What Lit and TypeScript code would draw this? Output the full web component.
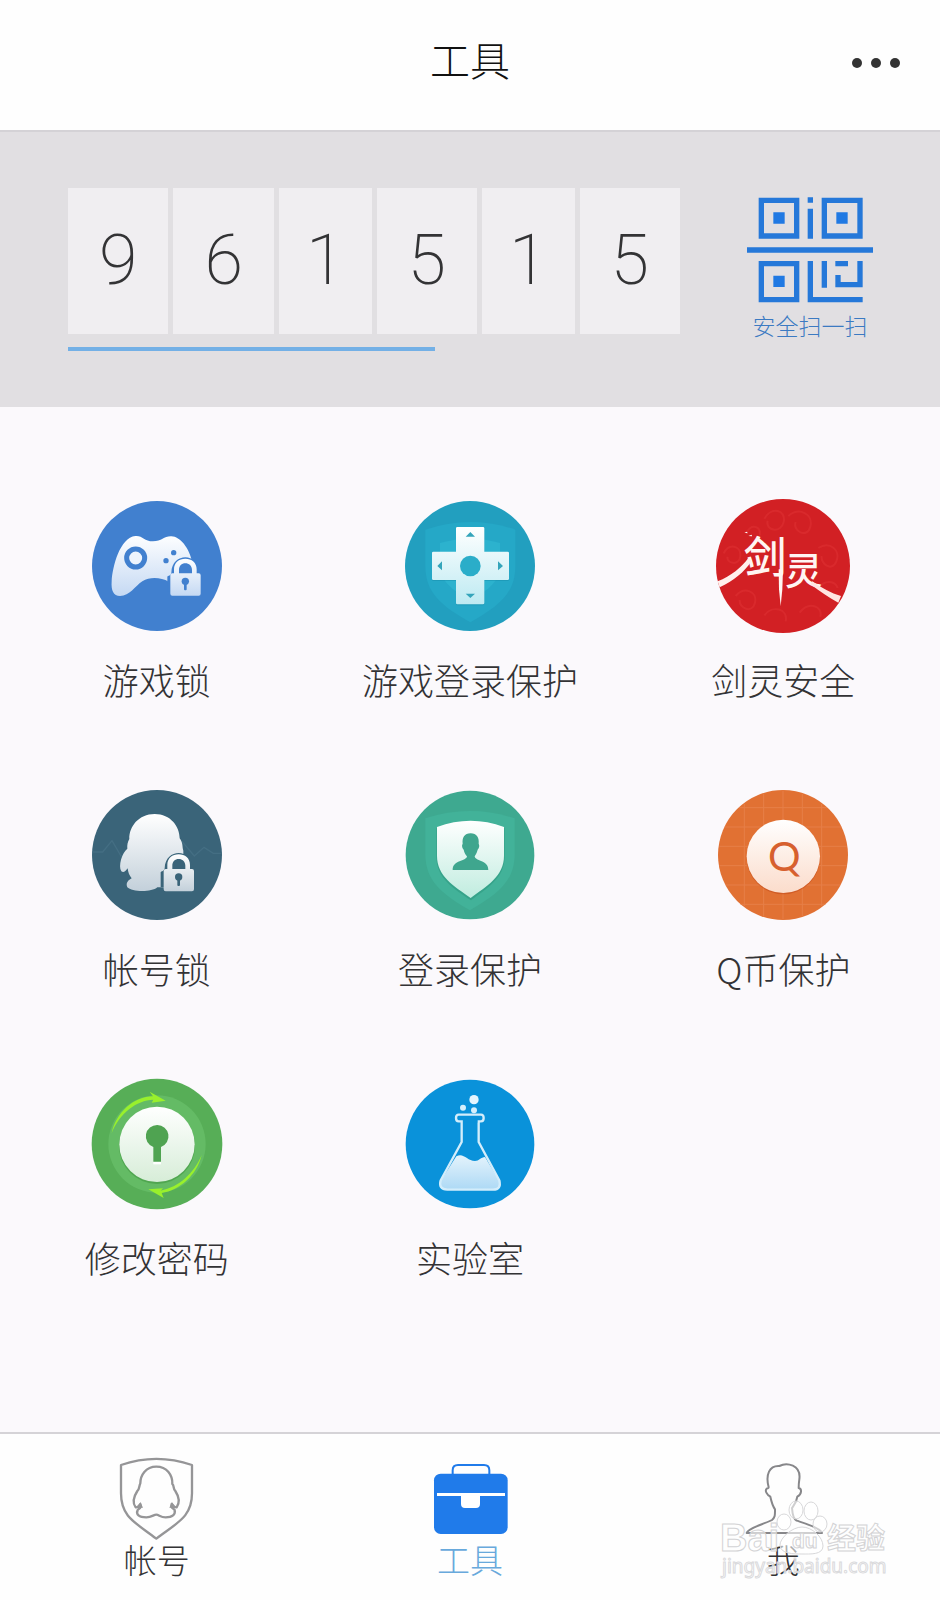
import { LitElement, html, svg, css } from "lit";
import { customElement, property } from "lit/decorators.js";

const lock = (x: number, y: number) => svg`
  <g transform="translate(${x} ${y})">
    <path d="M-54 78V34C-52 30-43 31-42 22C-41-10-20-24 0-24S41-10 42 22C43 31 52 30 52 34V78Z" fill="var(--disc)"/>
    <path d="M-45 30Q-45 24-39 24H-34V12C-34-8-19-20 0-20S34-8 34 12V24H40Q46 24 46 30V85Q46 91 40 91H-39Q-45 91-45 85ZM-19 24H20V14C20 2 11-6 0-6S-19 2-19 14Z"
      fill="url(#face)" fill-rule="evenodd"/>
    <circle cx="0" cy="48" r="11" fill="var(--disc)"/>
    <rect x="-4" y="52" width="8" height="23" rx="3" fill="var(--disc)"/>
  </g>`;

const face = (from: string, to: string) => svg`
  <defs><linearGradient id="face" x1="0" y1="0" x2="0" y2="1">
    <stop offset="0" stop-color=${from}/><stop offset="1" stop-color=${to}/>
  </linearGradient></defs>`;

const icons: Record<string, { box: string; art: unknown }> = {
  gamepad: {
    box: "60 58 402 402",
    art: svg`${face("#fdfeff", "#c5d9f3")}
      <g style="--disc:#4180cf"><circle cx="261" cy="259" r="195" fill="#4180cf"/>
      <path d="M196 169C218 167 222 185 249 185S282 169 304 170C331 171 357 205 366 245L340 320L296 306C274 294 241 290 217 305C194 320 180 349 150 349C130 349 123 333 125 305C127 262 150 173 196 169Z" fill="url(#face)"/>
      <circle cx="197" cy="235" r="27" fill="#edf4fd" stroke="#4180cf" stroke-width="15"/>
      <circle cx="311" cy="219" r="8" fill="#4180cf"/><circle cx="288" cy="243" r="8" fill="#4180cf"/>
      ${lock(346, 257)}</g>`,
  },
  dpad: {
    box: "161 58 402 402",
    art: svg`${face("#ffffff", "#bdeaf2")}
      <circle cx="362" cy="259" r="195" fill="#229fbf"/>
      <path d="M228 150Q363 104 498 150V258C498 340 450 378 363 428C276 378 228 340 228 258Z" fill="#25a8c7"/>
      <path d="M272 190Q363 164 452 190V258C452 302 420 330 363 362C306 330 272 302 272 258Z" fill="#2cb2ce"/>
      <path d="M325 146H401Q405 146 405 150V219H475Q479 219 479 223V300Q479 304 475 304H405V373Q405 377 401 377H324Q320 377 320 373V304H252Q248 304 248 300V223Q248 219 252 219H320V150Q320 146 325 146Z" fill="#178ba8" opacity=".45"/>
      <path d="M324 142H401Q405 142 405 146V216H475Q479 216 479 220V297Q479 301 475 301H405V370Q405 374 401 374H324Q320 374 320 370V301H252Q248 301 248 297V220Q248 216 252 216H320V146Q320 142 324 142Z" fill="url(#face)"/>
      <circle cx="363" cy="259" r="31" fill="#2aadc9"/>
      <path d="M349 171L363 157L377 171ZM349 342H377L363 355ZM278 245V272L264 259ZM446 245V272L461 259Z" fill="#35a5bb"/>`,
  },
  sword: {
    box: "83 59 402 402",
    art: svg`<circle cx="284" cy="260" r="201" fill="#d22024"/>
      <g fill="none" stroke="#db2d30" stroke-width="6" opacity=".7">
        <path d="M228 118C250 80 294 92 286 128S230 154 238 124M300 110C332 82 376 104 366 142S312 154 322 128M106 222C122 190 158 198 156 230S112 252 118 232M390 206C424 184 458 212 444 246S396 252 400 230M142 350C168 320 208 336 200 370S152 388 154 362M228 408C252 376 300 388 292 426M334 400C360 366 404 378 396 412M390 326C410 300 440 304 448 326M176 158C190 132 218 140 214 168"/>
      </g>
      <g font-family="'Noto Sans CJK SC', sans-serif" font-weight="500" fill="#fff5f2">
        <text x="166" y="280" font-size="128">剑</text>
        <text x="290" y="318" font-size="112">灵</text>
      </g>
      <path d="M180 236C160 264 128 290 88 306L94 324C136 304 168 278 190 244Z" fill="#fff0ed"/>
      <path d="M271 270L284 270L282 330L277 380L272 330Z" fill="#fff5f2"/>
      <path d="M372 306C400 326 428 342 458 350L450 370C420 354 394 336 366 314Z" fill="#ffe6e2"/>
      <path d="M168 160l8-3 2 5ZM180 170l10-4 1 5Z" fill="#fff"/>`,
  },
  penguin: {
    box: "60 56 402 402",
    art: svg`${face("#ffffff", "#c3d0da")}
      <g style="--disc:#3a6479"><circle cx="261" cy="257" r="195" fill="#3a6479"/>
      <path d="M68 248H98L126 214L154 262M336 216L373 260L402 234L430 252H454" fill="none" stroke="#446e83" stroke-width="4"/>
      <path d="M254 134C302 134 329 172 329 207C340 222 336 232 340 244V354H262C244 370 185 368 172 354C166 340 176 332 185 327C178 318 174 309 173 297C166 307 160 311 154 306C144 290 156 250 172 238C171 226 173 218 178 209C177 172 206 134 254 134Z" fill="url(#face)"/>
      ${lock(326, 275)}</g>`,
  },
  shield: {
    box: "72 53 402 402",
    art: svg`${face("#ffffff", "#c0ecdf")}
      <circle cx="273" cy="254" r="193" fill="#3ea990"/>
      <path d="M139 144Q273 100 407 144V250C407 334 355 372 273 420C191 372 139 334 139 250Z" fill="#42b299"/>
      <path d="M172 174Q275 132 377 174V262C375 326 322 354 276 390C224 354 174 326 172 262Z" fill="#299078" opacity=".45"/>
      <path d="M174 170Q275 132 375 170V256C375 318 324 346 275 383C224 346 174 318 174 256Z" fill="url(#face)"/>
      <path d="M275 189C293 189 301 202 299 220C303 227 299 235 296 238C293 249 289 254 287 258C289 274 328 268 328 299H221C221 268 262 274 264 258C260 254 256 248 254 238C250 234 247 226 251 220C249 202 256 189 275 189Z" fill="#3fa68e"/>`,
  },
  coin: {
    box: "54 54 402 402",
    art: svg`${face("#ffffff", "#fbdccb")}
      <circle cx="255" cy="255" r="195" fill="#e17133"/>
      <path d="M139 102V408M197 71V439M255 61V449M313 71V439M371 102V408M123 113H387M80 171H430M64 229H446M64 287H446M84 345H426M128 403H382" stroke="#e67f48" stroke-width="3"/>
      <circle cx="256" cy="263" r="110" fill="#c54e1d" opacity=".6"/>
      <circle cx="256" cy="259" r="110" fill="url(#face)"/>
      <text x="259" y="302" text-anchor="middle" font-family="Lato, sans-serif" font-weight="400" font-size="122" fill="#d7602e">Q</text>`,
  },
  keyhole: {
    box: "59 50 402 402",
    art: svg`${face("#ffffff", "#d7edd8")}
      <circle cx="260" cy="251" r="196" fill="#57ae57"/>
      <circle cx="260" cy="251" r="146" fill="#64bb65"/>
      <circle cx="260" cy="257" r="114" fill="#439843" opacity=".6"/>
      <path d="M124 218C137 158 190 108 248 108L238 94L286 121L244 127L249 118C198 120 148 158 124 218Z" fill="#99f02c"/>
      <path d="M394 284C380 344 328 390 274 398L280 413L234 387L278 384L271 391C326 380 370 340 394 284Z" fill="#99f02c"/>
      <circle cx="260" cy="252" r="113" fill="url(#face)"/>
      <path d="M249 303H272V312H249Z" fill="#fff"/>
      <path d="M261 194A34 34 0 0 1 272 260V304H249V260A34 34 0 0 1 261 194Z" fill="#4fa351"/>`,
  },
  flask: {
    box: "72 48 402 402",
    art: svg`${face("#e4f3fc", "#add9f5")}
      <circle cx="273" cy="249" r="193" fill="#0a92da"/>
      <path d="M232 286C254 274 264 300 288 300C300 300 306 288 318 288L361 360Q368 386 342 386H205Q177 384 185 360Z" fill="url(#face)"/>
      <path d="M239 161H306Q314 161 314 171T306 181H299V243L361 358Q368 386 342 386H205Q177 384 185 358L248 243V181H239Q231 181 231 171T239 161Z" fill="none" stroke="#d3edfb" stroke-width="7"/>
      <path d="M252 181H295" stroke="#0a92da" stroke-width="8"/>
      <circle cx="285" cy="116" r="14" fill="#e4f5fe"/><circle cx="252" cy="140" r="9" fill="#d5effc"/><circle cx="285" cy="148" r="9" fill="#d5effc"/>`,
  },
  account: {
    box: "74 111 252 252",
    art: svg`<g fill="none" stroke="#959597" stroke-width="7" stroke-linejoin="round">
      <path d="M92 135Q198 98 305 135V220C305 292 260 308 198 356C136 308 92 292 92 220Z"/>
      <path d="M198 140C230 140 247 166 246 192C252 196 248 208 255 213C266 230 270 246 259 262C252 264 250 256 244 252C240 264 248 264 253 270C256 284 246 292 226 292C210 292 206 284 198 284S184 292 168 292C146 292 136 284 142 270C148 264 154 264 150 252C146 256 144 264 136 262C124 246 130 230 141 213C148 208 146 196 150 190C150 166 166 140 198 140Z"/></g>
      <path d="M150 246L158 263L141 264ZM245 246L255 264L237 263Z" fill="#959597"/>`,
  },
  toolbox: {
    box: "1014 111 252 252",
    art: svg`<path d="M1088 164V151Q1088 135 1104 135H1182Q1198 135 1198 151V164" fill="none" stroke="#207bea" stroke-width="6"/>
      <rect x="1032" y="161" width="221" height="181" rx="20" fill="#207bea"/>
      <path d="M1041 219H1245V228H1170V252Q1170 264 1158 264H1125Q1113 264 1113 252V228H1041Z" fill="#fff"/>`,
  },
  person: {
    box: "125 111 252 252",
    art: svg`<path d="M142 339C144 324 206 308 218 300C228 292 227 284 227 268C219 256 216 244 213 230C202 224 196 212 202 206C206 204 208 206 208 202C198 164 210 136 240 138C262 126 306 134 300 178C298 190 298 198 298 204C308 206 308 222 294 230C292 248 282 258 278 264C280 290 284 296 292 302C310 308 362 322 368 339Z" fill="none" stroke="#87878a" stroke-width="6" stroke-linejoin="round"/>`,
  },
};

@customElement("line-icon")
class LineIcon extends LitElement {
  @property() name = "";
  static styles = css`
    :host { display: block; }
    .art { display: block; width: 100%; height: 100%; }
  `;
  render() {
    const icon = icons[this.name];
    return html`<svg class="art" viewBox=${icon.box} aria-hidden="true">${icon.art}</svg>`;
  }
}

@customElement("app-root")
class AppRoot extends LitElement {
  private code = "961515";
  private tools = [
    ["gamepad", "游戏锁"],
    ["dpad", "游戏登录保护"],
    ["sword", "剑灵安全"],
    ["penguin", "帐号锁"],
    ["shield", "登录保护"],
    ["coin", "Q币保护"],
    ["keyhole", "修改密码"],
    ["flask", "实验室"],
  ];
  private tabs = [
    ["account", "帐号"],
    ["toolbox", "工具"],
    ["person", "我"],
  ];

  static styles = css`
    :host {
      display: flex;
      flex-direction: column;
      min-height: 100vh;
      position: relative;
      background: #fbf9fc;
      color: #333335;
      font-family: "Noto Sans CJK SC", sans-serif;
      font-weight: 300;
    }
    * { box-sizing: border-box; }
    button { border: 0; padding: 0; background: none; font: inherit; color: inherit; cursor: pointer; }
    a { color: inherit; text-decoration: none; }

    .header {
      display: grid;
      grid-template-columns: 1fr auto 1fr;
      align-items: end;
      padding: 29px 36px 41px;
      background: #fefefe;
    }
    .title { grid-column: 2; margin: 0; font-size: 40px; line-height: 60px; font-weight: 300; color: #111; }
    .more { justify-self: end; display: flex; gap: 9px; padding: 21px 4px; }
    .dot { width: 10px; height: 10px; border-radius: 50%; background: #333; }

    .panel {
      display: flex;
      align-items: flex-start;
      justify-content: space-between;
      padding: 56px 67px 56px 68px;
      border-top: 2px solid #d4d2d6;
      background: #e1dfe2;
    }
    .token { flex: 0 1 612px; }
    .digits { display: flex; gap: 5px; margin: 0; }
    .digit {
      flex: 101 1 0;
      padding-bottom: 2px;
      background: #f0eef1;
      font-family: Roboto, sans-serif;
      font-size: 70px;
      line-height: 144px;
      font-weight: 200;
      text-align: center;
    }
    .digit.narrow { flex-grow: 93; }
    .timer { height: 4px; margin-top: 13px; }
    .elapsed { width: 60%; height: 100%; background: #73b0e6; }
    .scan { display: flex; flex-direction: column; align-items: center; margin-top: 9px; color: #3b7ac2; font-size: 23px; line-height: 34px; }
    .qr { display: block; width: 126px; height: 106px; margin-bottom: 5px; }

    .tools {
      flex: 1;
      display: grid;
      grid-template-columns: repeat(3, 1fr);
      align-content: start;
      row-gap: 85px;
      padding: 92px 0 60px;
    }
    .tool { display: flex; flex-direction: column; align-items: center; gap: 22px; font-size: 36px; line-height: 48px; }
    .badge { width: 134px; height: 134px; }

    .tabs {
      display: grid;
      grid-template-columns: repeat(3, 1fr);
      padding: 23px 0;
      border-top: 2px solid #d5d3d7;
      background: #fefefe;
    }
    .tab { display: flex; flex-direction: column; align-items: center; font-size: 33px; line-height: 36px; }
    .tab.active { color: #68a9dc; }
    .glyph { width: 84px; height: 84px; }

    .mark { position: absolute; right: 44px; bottom: 21px; width: 180px; height: 88px; pointer-events: none; }
  `;

  render() {
    return html`
      <header class="header">
        <h1 class="title">工具</h1>
        <button class="more" aria-label="更多">
          <span class="dot"></span><span class="dot"></span><span class="dot"></span>
        </button>
      </header>
      <section class="panel">
        <div class="token">
          <div class="digits">
            ${[...this.code].map((d) => html`<span class="digit ${d === "1" ? "narrow" : ""}">${d}</span>`)}
          </div>
          <div class="timer"><div class="elapsed"></div></div>
        </div>
        <button class="scan">
          <svg class="qr" viewBox="82 52 378 318" aria-hidden="true">
            <g fill="none" stroke="#2578d9" stroke-width="16">
              <path d="M125 62H231V169H125ZM314 62H421V169H314ZM125 252H231V360H125ZM272 53V69M272 87V177M82 211H460M272 244V360H429M314 244V324M347 252H385M421 244V315H355V286"/>
            </g>
            <path d="M161 98H195V132H161ZM350 98H384V132H350ZM161 288H195V322H161Z" fill="#2079e3"/>
          </svg>
          安全扫一扫
        </button>
      </section>
      <main class="tools">
        ${this.tools.map(
          ([icon, label]) => html`<button class="tool"><line-icon class="badge" name=${icon}></line-icon>${label}</button>`
        )}
      </main>
      <nav class="tabs">
        ${this.tabs.map(
          ([icon, label]) => html`<a class="tab ${icon === "toolbox" ? "active" : ""}" href="#${icon}"
            ><line-icon class="glyph" name=${icon}></line-icon>${label}</a>`
        )}
      </nav>
      <svg class="mark" viewBox="0 0 180 88">
        <g fill="#fff" fill-opacity=".6" stroke="#d8d8da" stroke-width="1">
          <ellipse cx="68" cy="31" rx="7" ry="8"/><ellipse cx="80" cy="19" rx="7" ry="9"/>
          <ellipse cx="95" cy="20" rx="7" ry="9"/><ellipse cx="104" cy="33" rx="7" ry="8"/>
          <path d="M86 36C96 36 107 46 107 55C107 64 94 63 86 63S64 63 64 54C64 47 76 36 86 36Z"/>
        </g>
        <g fill="#fff" fill-opacity=".6" stroke="#d3d3d5" stroke-width="1" font-weight="700">
          <text x="4" y="60" font-size="38" font-family="'Liberation Sans', sans-serif">Bai</text>
          <text x="76" y="57" font-size="21" font-family="'Liberation Sans', sans-serif">du</text>
          <text x="111" y="58" font-size="29" font-family="'Noto Sans CJK SC', sans-serif">经验</text>
        </g>
        <text x="6" y="82" font-size="19" font-family="'Noto Sans', sans-serif" font-weight="400" fill="#fff" fill-opacity=".6" stroke="#dadadc" stroke-width="1">jingyan.baidu.com</text>
      </svg>
    `;
  }
}
